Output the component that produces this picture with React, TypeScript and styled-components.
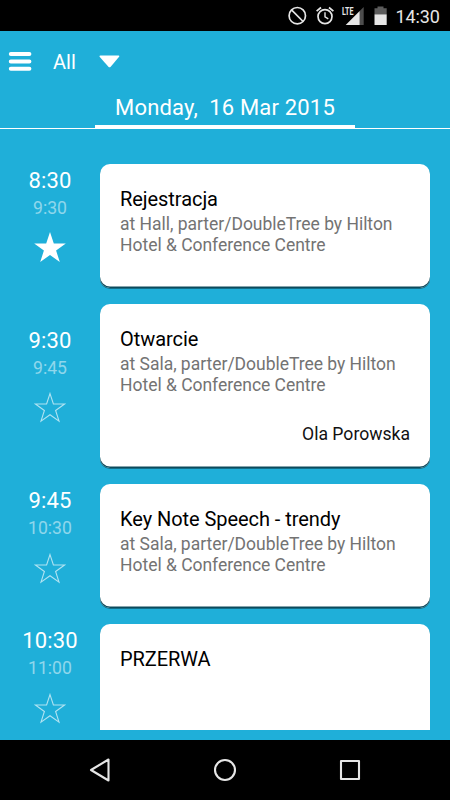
import React from "react";
import styled, { createGlobalStyle } from "styled-components";

const Global = createGlobalStyle`
  * { box-sizing: border-box; }
  body { margin: 0; background: #1fafd9; font-family: Roboto, "Open Sans", sans-serif; }
`;

const Screen = styled.main`
  width: 450px;
  height: 800px;
  display: flex;
  flex-direction: column;
  overflow: hidden;
  background: #1fafd9;
`;

const StatusBar = styled.div`
  height: 31px;
  flex: none;
  display: flex;
  background: #000;
  color: #e6e6e6;
`;

const StatusIcons = styled.svg`
  display: block;
  width: 122px;
  height: 31px;
  margin-left: 270px;
`;

const Clock = styled.span`
  margin-left: 3.5px;
  font-size: 18px;
  line-height: 33px;
  letter-spacing: -0.1px;
  white-space: nowrap;
`;

const Toolbar = styled.header`
  height: 62px;
  flex: none;
  display: flex;
  align-items: center;
  padding-left: 8px;
  color: #fff;
`;

const MenuIcon = styled.svg`
  width: 24px;
  height: 20px;
`;

const FilterLabel = styled.span`
  margin-left: 21px;
  width: 46px;
  font-size: 20px;
  line-height: 24px;
`;

const Caret = styled.svg`
  width: 22px;
  height: 14px;
`;

const DateStrip = styled.nav`
  height: 36px;
  flex: none;
  display: flex;
  justify-content: center;
  border-bottom: 1px solid #fff;
`;

const DateTab = styled.div`
  width: 260px;
  height: 35px;
  border-bottom: 3px solid #fff;
  color: #fff;
  font-size: 22px;
  letter-spacing: 0.18px;
  line-height: 30px;
  text-align: center;
  white-space: pre;
`;

const Agenda = styled.section`
  height: 601px;
  flex: none;
  margin-bottom: 10px;
  padding-top: 35px;
  overflow: hidden;
  display: flex;
  flex-direction: column;
  gap: 16px;
`;

const Slot = styled.article<{ $height: number }>`
  flex: none;
  height: ${(p) => p.$height}px;
  display: grid;
  grid-template-columns: 100px 330px;
`;

const Times = styled.div<{ $offset: number }>`
  display: flex;
  flex-direction: column;
  align-items: center;
  padding-top: ${(p) => p.$offset}px;
  color: #fff;
`;

const Start = styled.time`
  font-size: 22px;
  letter-spacing: 0.1px;
  line-height: 28px;
`;

const End = styled.time`
  margin-top: 1px;
  font-size: 17.6px;
  line-height: 24px;
  color: rgba(255, 255, 255, 0.5);
`;

const StarIcon = styled.svg`
  margin-top: 10.2px;
  width: 34px;
  height: 34px;
`;

const Card = styled.div`
  display: flex;
  flex-direction: column;
  padding: 22px 20px 0;
  border-radius: 10px;
  background: #fff;
  box-shadow: inset 0 -1.5px 0 #0d4a5c, 0 1px 0 #146d87;
`;

const Title = styled.h2`
  margin: 0;
  font-size: 20px;
  letter-spacing: -0.06px;
  font-weight: 400;
  line-height: 26px;
  color: #000;
`;

const Place = styled.p`
  margin: 2.1px 0 0;
  font-size: 17.5px;
  letter-spacing: -0.02px;
  line-height: 20.5px;
  color: #737373;
  white-space: pre-line;
`;

const Speaker = styled.p`
  margin: 28px 0 0;
  font-size: 17.6px;
  line-height: 22px;
  text-align: right;
  color: #111;
`;

const NavBar = styled.footer`
  height: 60px;
  flex: none;
  display: flex;
  align-items: center;
  justify-content: center;
  gap: 99px;
  background: #000;
`;

const NavIcon = styled.svg`
  width: 26px;
  height: 26px;
  fill: none;
  stroke: #e6e6e6;
  stroke-width: 2.1;
  stroke-linejoin: round;
`;

const STAR = "M17 2.1L20.8 13.4 32.8 13.5 23.1 20.6 26.8 32.1 17 25 7.2 32.1 10.9 20.6 1.2 13.5 13.2 13.4z";
const STAR_OUTLINE = "M17 3.6L20.4 13.9 31.6 14 22.6 20.5 26 31.2 17 24.7 8 31.2 11.4 20.5 2.4 14 13.6 13.9z";

interface Talk {
  start: string;
  end: string;
  title: string;
  place?: string;
  speaker?: string;
  starred?: boolean;
  height: number;
  offset: number;
}

const HOTEL = "parter/DoubleTree by Hilton\nHotel & Conference Centre";

const talks: Talk[] = [
  { start: "8:30", end: "9:30", title: "Rejestracja", place: `at Hall, ${HOTEL}`, starred: true, height: 124, offset: 3 },
  { start: "9:30", end: "9:45", title: "Otwarcie", place: `at Sala, ${HOTEL}`, speaker: "Ola Porowska", height: 164.4, offset: 23 },
  { start: "9:45", end: "10:30", title: "Key Note Speech - trendy", place: `at Sala, ${HOTEL}`, height: 124, offset: 3 },
  { start: "10:30", end: "11:00", title: "PRZERWA", height: 124, offset: 3 },
];

function Star({ filled }: { filled?: boolean }) {
  return (
    <StarIcon viewBox="0 0 34 34">
      {filled ? (
        <path d={STAR} fill="#fff" />
      ) : (
        <path d={STAR_OUTLINE} fill="none" stroke="#fff" strokeOpacity="0.65" strokeWidth="1.1" />
      )}
    </StarIcon>
  );
}

export default function App() {
  return (
    <>
      <Global />
      <Screen>
        <StatusBar>
          <StatusIcons viewBox="270 0 122 31">
            <g fill="none" stroke="#e6e6e6" strokeWidth="1.7">
              <circle cx="297.3" cy="15.7" r="8.2" />
              <path d="M291.5 9.9l11.6 11.6" />
              <circle cx="325" cy="16.6" r="7" />
              <path d="M325 12.2v4.7l3.3 2" strokeWidth="1.4" />
              <path d="M316.6 11.2l4.4-3.7M333.4 11.2L329 7.5" />
            </g>
            <path d="M363.7 7v18h-4V11z" fill="#4d4d4d" />
            <path d="M359.7 11v14h-14z" fill="#e6e6e6" />
            <text x="342" y="14.8" fill="#e6e6e6" fontSize="10.5" fontWeight="700" textLength="11.5" lengthAdjust="spacingAndGlyphs">LTE</text>
            <path d="M374.5 8.3h3V6.4h6v1.9h3.2v6h-12.2z" fill="#5c5c5c" />
            <path d="M374.5 14.3h12.2V25h-12.2z" fill="#e6e6e6" />
          </StatusIcons>
          <Clock>14:30</Clock>
        </StatusBar>
        <Toolbar>
          <MenuIcon viewBox="0 0 24 20">
            <path d="M2.8 2h18.6M2.8 9.4h18.6M2.8 16.8h18.6" stroke="#fff" strokeWidth="4" strokeLinecap="round" />
          </MenuIcon>
          <FilterLabel>All</FilterLabel>
          <Caret viewBox="0 0 22 14">
            <path d="M1.5.5h18.2q1.2.2.4 1.3l-8.4 10q-1.2 1-2.3 0L.6 1.7Q.2.5 1.5.5z" fill="#fff" />
          </Caret>
        </Toolbar>
        <DateStrip>
          <DateTab>{"Monday,  16 Mar 2015"}</DateTab>
        </DateStrip>
        <Agenda>
          {talks.map((t) => (
            <Slot key={t.start} $height={t.height}>
              <Times $offset={t.offset}>
                <Start>{t.start}</Start>
                <End>{t.end}</End>
                <Star filled={t.starred} />
              </Times>
              <Card>
                <Title>{t.title}</Title>
                {t.place && <Place>{t.place}</Place>}
                {t.speaker && <Speaker>{t.speaker}</Speaker>}
              </Card>
            </Slot>
          ))}
        </Agenda>
        <NavBar>
          <NavIcon viewBox="0 0 26 26">
            <path d="M21.5 2.5v21L4 13z" />
          </NavIcon>
          <NavIcon viewBox="0 0 26 26">
            <circle cx="13" cy="13" r="10" />
          </NavIcon>
          <NavIcon viewBox="0 0 26 26">
            <path d="M4 4h18v18H4z" />
          </NavIcon>
        </NavBar>
      </Screen>
    </>
  );
}
